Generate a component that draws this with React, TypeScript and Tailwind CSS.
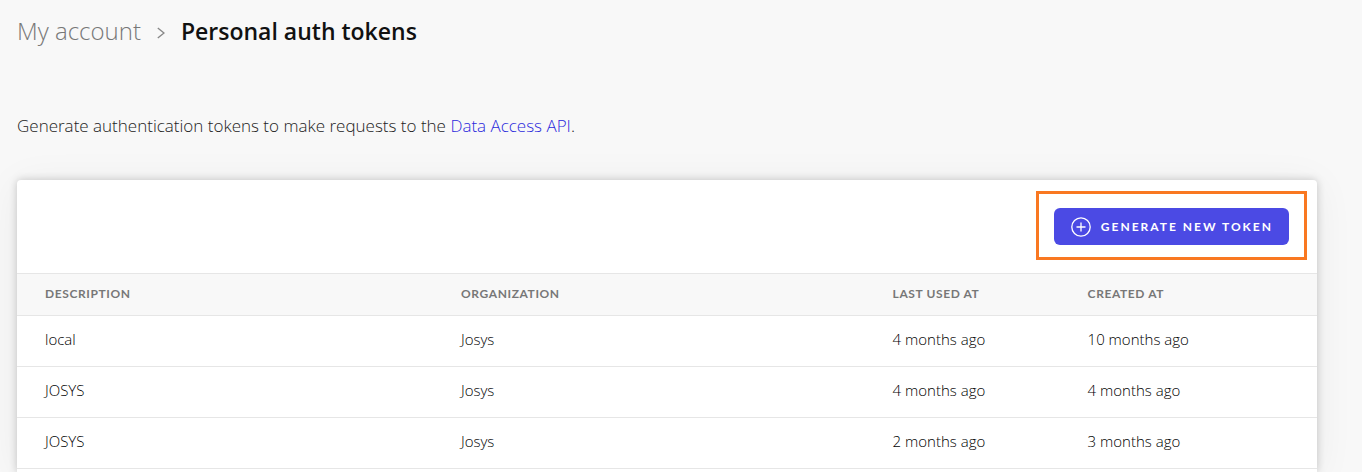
type Token = {
  description: string;
  organization: string;
  lastUsed: string;
  created: string;
};

const tokens: Token[] = [
  { description: 'local', organization: 'Josys', lastUsed: '4 months ago', created: '10 months ago' },
  { description: 'JOSYS', organization: 'Josys', lastUsed: '4 months ago', created: '4 months ago' },
  { description: 'JOSYS', organization: 'Josys', lastUsed: '2 months ago', created: '3 months ago' },
];

const PlusCircle = () => (
  <svg width="20" height="20" viewBox="0 0 20 20" fill="none" stroke="currentColor" strokeWidth="1.3" aria-hidden="true">
    <circle cx="10" cy="10" r="9.2" />
    <path d="M10 5.5v9M5.5 10h9" />
  </svg>
);

const Separator = () => (
  <svg
    width="8"
    height="12"
    viewBox="0 0 8 12"
    fill="none"
    stroke="currentColor"
    strokeWidth="1.4"
    className="mx-4 mt-1 text-[#888]"
    aria-hidden="true"
  >
    <path d="M.8 1 7 6 .8 11" />
  </svg>
);

const Breadcrumb = () => (
  <nav aria-label="Breadcrumb" className="flex items-center leading-8">
    <a href="#account" className="text-2xl leading-8 font-light text-[#777]">
      My account
    </a>
    <Separator />
    <h1 className="text-[23px] font-semibold text-[#111]">Personal auth tokens</h1>
  </nav>
);

const TokenTable = () => (
  <table className="w-full table-fixed border-collapse text-left">
    <colgroup>
      <col className="w-[32%]" />
      <col className="w-[33.2%]" />
      <col className="w-[15%]" />
      <col />
    </colgroup>
    <thead>
      <tr className="h-[42px] border-y border-[#e6e6e6] bg-[#f8f8f8] font-[Lato,sans-serif] text-xs uppercase tracking-wider text-[#777]">
        <th className="pb-px pl-7 font-bold">Description</th>
        <th className="pb-px pl-7 font-bold">Organization</th>
        <th className="pb-px pl-7 font-bold">Last used at</th>
        <th className="pb-px pl-7 font-bold">Created at</th>
      </tr>
    </thead>
    <tbody>
      {tokens.map((token, i) => (
        <tr key={i} className="h-[51px] border-b border-[#e6e6e6] text-[15px] leading-5 font-light text-black">
          <td className="pb-1 pl-7">{token.description}</td>
          <td className="pb-1 pl-7">{token.organization}</td>
          <td className="pb-1 pl-7">{token.lastUsed}</td>
          <td className="pb-1 pl-7">{token.created}</td>
        </tr>
      ))}
    </tbody>
  </table>
);

export default function App() {
  return (
    <main className="flex min-h-screen flex-col bg-[#f8f8f8] pt-[15px] pr-[45px] pl-[17px] font-['Open_Sans',sans-serif]">
      <Breadcrumb />
      <p className="mt-[65px] text-[17px] leading-7 font-light text-[#222]">
        Generate authentication tokens to make requests to the{' '}
        <a href="#api" className="text-[#2a28dc]">
          Data Access API
        </a>
        .
      </p>
      <section className="mt-10 flex-1 rounded-t-sm bg-white shadow-[0_0_8px_rgba(0,0,0,0.2),0_4px_40px_rgba(0,0,0,0.06)]">
        <div className="flex justify-end px-[10px] pt-[11px] pb-[13px]">
          <div className="border-3 border-[#f97821] px-[15px] pt-[14px] pb-3">
            <button
              type="button"
              className="flex h-[37px] items-center gap-[10px] rounded-md bg-[#4b4ae4] pr-4 pl-[17px] font-[Lato,sans-serif] text-xs font-bold tracking-[2px] text-white uppercase"
            >
              <PlusCircle />
              Generate new token
            </button>
          </div>
        </div>
        <TokenTable />
      </section>
    </main>
  );
}
